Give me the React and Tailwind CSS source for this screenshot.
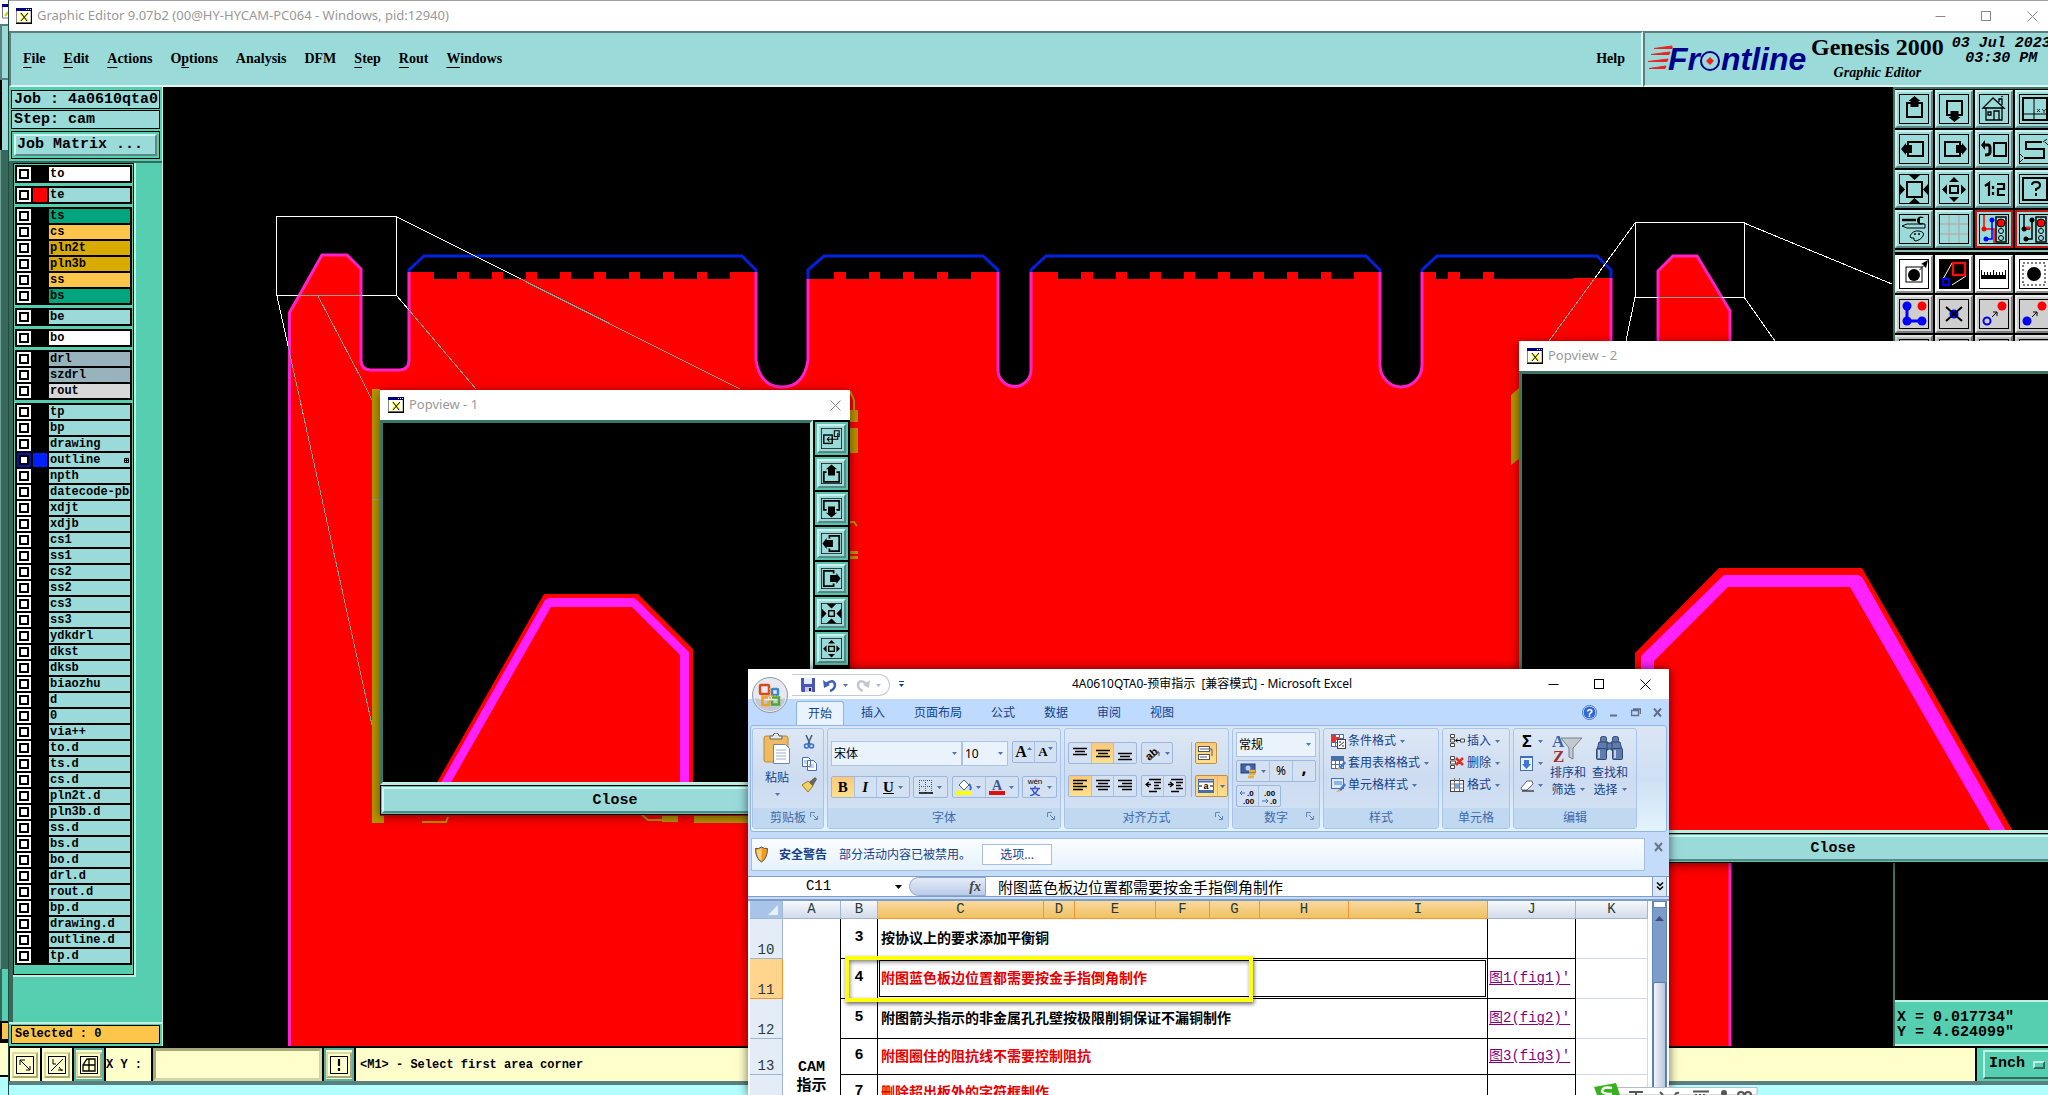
import React from "react";

const MONO = "font-['Liberation_Mono',monospace]";
const SERIF = "font-['Liberation_Serif',serif]";
const UI = "font-['Noto_Sans','Noto_Sans_CJK_SC',sans-serif]";
const SHEET = "font-['Liberation_Mono','Noto_Sans_CJK_SC',monospace]";

/* ---------- small shared pieces ---------- */

function WinIcon() {
  return (
    <svg width="16" height="16" viewBox="0 0 16 16" className="shrink-0" aria-hidden="true">
      <rect x="0.5" y="0.5" width="15" height="14" fill="#fff" stroke="#888" />
      <rect x="0" y="0" width="16" height="3" fill="#000080" />
      <path d="M10 1.5h1M12 1.5h1M14 1.5h1" stroke="#fff" />
      <path d="M4 5l8 8M12 5l-8 8" stroke="#ffff00" strokeWidth="2" />
      <path d="M5 5l6 8M12 5l-7 8" stroke="#000" strokeWidth="1" />
      <path d="M0 15.5h16M15.5 0v16" stroke="#000" strokeWidth="1.4" />
    </svg>
  );
}

const Min = ({ c }) => (
  <svg width="11" height="11" aria-hidden="true"><path d="M0.5 5.5h10" stroke={c} /></svg>
);
const Max = ({ c }) => (
  <svg width="11" height="11" aria-hidden="true"><rect x="0.5" y="0.5" width="9" height="9" fill="none" stroke={c} /></svg>
);
const Cross = ({ c }) => (
  <svg width="11" height="11" aria-hidden="true"><path d="M0.5 0.5l10 10M10.5 0.5l-10 10" stroke={c} /></svg>
);

/* ---------- tool icons, all on a 30 x 30 grid ---------- */

const Frame = <rect x="0.5" y="0.5" width="29" height="29" fill="none" stroke="#000" />;
const Sq = ({ x, y, w = 15, h = 14 }) => (
  <rect x={x} y={y} width={w} height={h} fill="none" stroke="#000" strokeWidth="2" />
);

const icons = {
  up: <>{Frame}<Sq x={8} y={9} /><path d="M15.5 2l6 5h-2v6h-8v-6h-2z" /></>,
  down: <>{Frame}<Sq x={8} y={7} /><path d="M15.5 28l6-5h-2v-6h-8v6h-2z" /></>,
  left: <>{Frame}<Sq x={9} y={8} /><path d="M2 15l5-6v2h6v8h-6v2z" /></>,
  right: <>{Frame}<Sq x={6} y={8} /><path d="M28 15l-5-6v2h-6v8h6v2z" /></>,
  upBig: <>{Frame}<path d="M8 13H4v14h22V13h-4" fill="none" stroke="#000" strokeWidth="2.500" /><path d="M15 2l8 7h-3v9H10V9H7z" /></>,
  downBig: <>{Frame}<path d="M8 17H4V4h22v13h-4" fill="none" stroke="#000" strokeWidth="2.500" /><path d="M15 28l8-7h-3v-9H10v9H7z" /></>,
  leftBig: <>{Frame}<path d="M12 8V4h14v22H12v-4" fill="none" stroke="#000" strokeWidth="2.500" /><path d="M2 15l6-8v3h9v10H8v3z" /></>,
  rightBig: <>{Frame}<path d="M18 8V4H4v22h14v-4" fill="none" stroke="#000" strokeWidth="2.500" /><path d="M28 15l-6-8v3h-9v10h9v3z" /></>,
  zinBig: <>{Frame}<Sq x={11} y={11} w={8} h={8} /><path d="M8 1h14l-7 7zM8 29h14l-7-7zM1 8v14l7-7zM29 8v14l-7-7z" /></>,
  house: (
    <>{Frame}
      <path d="M4 14L14 4l11 10z M7 14h16v12H7z M15 26v-9h5v9 M9 18h3v3h-3z M20 8v-3h3v6" fill="none" stroke="#000" strokeWidth="1.3" />
      <path d="M22 3l2-1" stroke="#000" />
    </>
  ),
  xy: <>{Frame}<Sq x={4} y={4} w={24} h={22} /><path d="M15 4v22M4 20h24" stroke="#000" /><path d="M18 15l3 3M21 15l-3 3M23 15l2 2 2-2M25 17v2" stroke="#000" fill="none" strokeWidth="0.8" /></>,
  undo: <>{Frame}<Sq x={15} y={9} w={12} h={13} /><path d="M4 11h5q2 0 2 3v4q0 3-5 3" fill="none" stroke="#000" strokeWidth="3" /><path d="M2 11l4-5v10z" /></>,
  snake: <>{Frame}<path d="M23 8H7v7h18v9H5" fill="none" stroke="#000" strokeWidth="2" /><path d="M24 8l4-3M26 8l3 3M4 23l-3-3M4 25l-3 3" stroke="#000" /></>,
  zin: <>{Frame}<Sq x={8} y={8} w={15} h={15} /><path d="M10 1h11l-5.500 5zM10 29h11l-5.500-5zM1 10v11l5-5.500zM29 10v11l-5-5.500z" /></>,
  zout: <>{Frame}<Sq x={11} y={12} w={8} h={7} /><path d="M10 8h10l-5-5zM10 23h10l-5 5zM8 10.500v10l-5-5zM22 10.500v10l5-5z" /></>,
  ratio: <>{Frame}<path d="M6 12l4-3v13M14 12v3M14 18v3M18 10h7v5h-6v6h7" fill="none" stroke="#000" strokeWidth="2.200" /></>,
  help: <>{Frame}<Sq x={4} y={4} w={24} h={22} /><path d="M13 11q0-3 4-3t4 3-4 4v2M17 19v3" fill="none" stroke="#000" strokeWidth="2" /></>,
  tools: (
    <>{Frame}
      <path d="M3 6h14" stroke="#000" strokeWidth="2.500" />
      <path d="M25 4a4 4 0 1 0 0 5h-4v-5z" />
      <path d="M3 12l5-2h18v4H8z" fill="none" stroke="#000" />
      <path d="M11 22q3-6 9-5t4 5-7 5q-3 0-2-3-4 1-4-2z" fill="none" stroke="#000" />
      <circle cx="16" cy="20" r="1" /><circle cx="20" cy="20" r="1" />
    </>
  ),
  grid: <>{Frame}<path d="M10 1v28M20 1v28M1 10h28M1 20h28" stroke="#c49a9a" /></>,
  traffic: (
    <>{Frame}
      <path d="M5 1v14M5 15h10v14" fill="none" stroke="#f00" strokeWidth="1.500" />
      <path d="M13 5v20H6" fill="none" stroke="#00f" strokeWidth="1.500" />
      <circle cx="5" cy="15" r="2.500" fill="#f00" /><circle cx="13" cy="6" r="2.500" fill="#00f" /><circle cx="7" cy="25" r="2.500" fill="#00f" />
      <rect x="17" y="3" width="10" height="25" fill="#9adbda" stroke="#000" strokeWidth="1.500" />
      <circle cx="22" cy="9" r="4" fill="#f00" stroke="#000" /><circle cx="22" cy="17" r="2.500" fill="none" stroke="#000" /><circle cx="22" cy="24" r="2.500" fill="none" stroke="#000" />
    </>
  ),
  traffic2: (
    <>{Frame}
      <path d="M5 1v14h6M13 5v20H6" fill="none" stroke="#000" strokeWidth="1.500" />
      <path d="M7 14h6M8 12v4M10 12v4" stroke="#f00" />
      <circle cx="5" cy="15" r="2.500" /><circle cx="13" cy="6" r="2.500" /><circle cx="7" cy="25" r="2.500" />
      <rect x="17" y="3" width="10" height="25" fill="#9adbda" stroke="#000" strokeWidth="1.500" />
      <circle cx="22" cy="9" r="4" fill="#f00" stroke="#000" /><circle cx="22" cy="17" r="2.500" fill="none" stroke="#000" /><circle cx="22" cy="24" r="2.500" fill="none" stroke="#000" />
    </>
  ),
  select: <>{Frame}<rect x="7" y="8" width="16" height="15" fill="none" stroke="#000" /><circle cx="15" cy="16" r="6" /><path d="M20 11l5-5-3-1 7-4-2 8-2-2-4 4z" /></>,
  popview: <><rect width="30" height="30" /><path d="M4 20L13 4M13 26l14-9" stroke="#fff" /><rect x="14" y="4" width="12" height="12" fill="none" stroke="#e11" strokeWidth="2.500" /><rect x="4" y="20" width="6" height="6" fill="none" stroke="#00f" strokeWidth="2" /></>,
  ruler: <>{Frame}<path d="M2 20v-9h1v5h2v-3h1v3h2v-3h1v3h2v-3h1v3h2v-5h1v5h2v-3h1v3h2v-3h1v3h2v-3h1v3h2v-5h1v9z" /></>,
  area: <>{Frame}<rect x="4" y="4" width="22" height="22" fill="none" stroke="#000" strokeDasharray="2 2" /><circle cx="15" cy="15" r="7" /></>,
  nodes: <>{Frame}<path d="M8 7v15h15" fill="none" stroke="#00f" strokeWidth="3" /><circle cx="8" cy="7" r="4.500" fill="#00f" /><circle cx="8" cy="22" r="4.500" fill="#00f" /><circle cx="23" cy="22" r="4.500" fill="#00f" /><circle cx="23" cy="7" r="4.500" fill="#f00" /></>,
  cut: <>{Frame}<circle cx="15" cy="15" r="4.500" fill="#00f" /><path d="M7 8l16 14M23 8L7 22" stroke="#000" strokeWidth="2" /></>,
  link: <>{Frame}<circle cx="23" cy="7" r="4.500" fill="#f00" /><circle cx="8" cy="22" r="3.500" fill="none" stroke="#00f" strokeWidth="2" /><path d="M13 18l5-5M14 13h4v4" stroke="#000" fill="none" /></>,
  move: <>{Frame}<circle cx="23" cy="7" r="4.500" fill="#f00" /><circle cx="8" cy="22" r="4.500" fill="#00f" /><path d="M13 18l5-5M14 13h4v4" stroke="#000" fill="none" /></>,
  back: <>{Frame}<Sq x={4} y={10} w={12} h={12} /><path d="M19 4h7v8h-7zM24 7v9h-14M12 12.500l-3 3.500 3 3.500" fill="none" stroke="#000" strokeWidth="1.500" /></>,
  blank: <>{Frame}</>,
};

const tones = {
  teal: "border-t-[#cdf0ef] border-l-[#cdf0ef] border-b-[#5b8787] border-r-[#5b8787] bg-[#9adbda]",
  red: "border-[#c41414] bg-[#9adbda]",
  white: "border-t-[#f4f4f4] border-l-[#f4f4f4] border-b-[#8d8d8d] border-r-[#8d8d8d] bg-white",
  grey: "border-t-[#ececec] border-l-[#ececec] border-b-[#7d7d7d] border-r-[#7d7d7d] bg-[#cfcfcf]",
};

function ToolButton({ icon, tone = "teal" }) {
  return (
    <button aria-label={icon} className={`h-[38px] w-[38px] border-2 p-[2px] ${tones[tone]}`}>
      <svg viewBox="0 0 30 30" className="block h-full w-full">{icons[icon]}</svg>
    </button>
  );
}

/* ---------- main window ---------- */

const menu = [["", "F", "ile"], ["", "E", "dit"], ["", "A", "ctions"], ["O", "p", "tions"], ["Analysis", "", ""], ["DFM", "", ""], ["", "S", "tep"], ["", "R", "out"], ["", "W", "indows"]];

function Logo() {
  return (
    <svg width="163" height="40" viewBox="0 0 163 40" className="shrink-0" role="img" aria-label="Frontline">
      <path d="M24 5L6 7.500h18zM22 11L3 13.500h18zM20 18L0 20.500h19zM18 25L1 27.500h16z" fill="#e22" stroke="#e22" />
      <g fontFamily="Liberation Sans, sans-serif" fontWeight="700" fontStyle="italic" fontSize="32" fill="#00008b">
        <text x="20" y="29">Fr</text>
        <text x="73" y="29">ntline</text>
      </g>
      <circle cx="62" cy="20" r="9" fill="#9adbda" stroke="#00008b" strokeWidth="2" />
      <path d="M62 16l4 4-4 4-4-4z" fill="#e22" />
    </svg>
  );
}

function Header() {
  return (
    <header className="flex h-14 bg-[#9adbda]">
      <nav className={`flex min-w-0 flex-1 items-center gap-[18px] border-2 border-t-[#5b7f80] border-r-[#dff5f5] border-b-[#dff5f5] border-l-[#5b7f80] pl-3 pr-4 text-[14px] font-bold leading-[18px] text-black ${SERIF}`}>
        {menu.map(([a, b, c]) => (
          <button key={a + b + c}>{a}{b && <u className="underline-offset-[4px]">{b}</u>}{c}</button>
        ))}
        <button className="ml-auto">Help</button>
      </nav>
      <div className="flex w-[405px] shrink-0 overflow-hidden border-2 border-r-0 border-t-[#5b7f80] border-b-[#dff5f5] border-l-[#5b7f80] pl-[3px] text-black">
        <div className="pt-2"><Logo /></div>
        <div className={`shrink-0 text-center ${SERIF}`}>
          <h1 className="text-[24px] font-bold leading-7">Genesis 2000</h1>
          <p className="pt-[2px] text-[14px] font-bold italic leading-5">Graphic Editor</p>
        </div>
        <div className={`shrink-0 whitespace-nowrap pl-2 pt-[3px] text-center text-[15px] font-bold italic leading-[15px] ${MONO}`}>
          <p>03 Jul 2023</p>
          <p>03:30 PM</p>
        </div>
      </div>
    </header>
  );
}

const C = { w: "bg-white", t: "bg-[#9adbda]", g: "bg-[#00a57c]", o: "bg-[#fdc64b]", y: "bg-[#d9ab00]", b: "bg-[#99b3bd]", s: "bg-[#d8d8d8]" };
const groups = [
  [["to", "w"]],
  [["te", "t"]],
  [["ts", "g"], ["cs", "o"], ["pln2t", "y"], ["pln3b", "y"], ["ss", "o"], ["bs", "g"]],
  [["be", "t"]],
  [["bo", "w"]],
  [["drl", "b"], ["szdrl", "b"], ["rout", "s"]],
  "tp bp drawing outline npth datecode-pbc xdjt xdjb cs1 ss1 cs2 ss2 cs3 ss3 ydkdrl dkst dksb biaozhu d 0 via++ to.d ts.d cs.d pln2t.d pln3b.d ss.d bs.d bo.d drl.d rout.d bp.d drawing.d outline.d tp.d".split(" ").map((n) => [n, "t"]),
];

function LayerRow({ name, color }) {
  const active = name === "outline";
  const swatch = name === "te" ? "bg-[#f00]" : active ? "bg-[#0020ff]" : "bg-black";
  return (
    <label className="flex h-4 items-center gap-[2px]">
      <input
        type="checkbox"
        className={`h-[14px] w-[14px] shrink-0 appearance-none border-2 bg-white shadow-[inset_0_0_0_2px_#000] ${active ? "border-[#0a12a0]" : "border-white"}`}
      />
      <span className={`h-[14px] w-[14px] shrink-0 ${swatch}`} />
      <span className={`flex h-[14px] flex-1 items-center overflow-hidden whitespace-nowrap pl-px text-[12px] font-bold leading-[14px] text-black ${MONO} ${C[color]}`}>
        {name}
        {active && (
          <svg width="5" height="5" className="ml-auto mr-px" aria-hidden="true"><path d="M0.500 0.500h4v4h-4zM2.500 0v5M0 2.500h5" fill="none" stroke="#000" /></svg>
        )}
      </span>
    </label>
  );
}

function LayerPanel() {
  return (
    <aside className="flex w-[154px] shrink-0 flex-col border-r border-[#bdf2e2] bg-[#55cfb0]">
      <div className={`flex flex-col gap-px px-[2px] pt-[3px] text-[15px] font-bold text-black ${MONO}`}>
        <p className="h-[19px] overflow-hidden whitespace-nowrap border border-black bg-[#9adbda] pl-[2px] leading-[18px]">Job : 4a0610qta0</p>
        <p className="h-[19px] border border-black bg-[#9adbda] pl-[2px] leading-[17px]">Step: cam</p>
        <div className="mt-px h-[28px] border border-black p-[2px]">
          <button className="block h-[22px] w-full border-2 border-t-[#d5f5f5] border-r-[#5b8787] border-b-[#5b8787] border-l-[#d5f5f5] bg-[#9adbda] pl-px text-left leading-[18px]">Job Matrix ...</button>
        </div>
      </div>
      <div className="mt-[2px] min-h-0 flex-1 border-l-4 border-t-2 border-[#35695c]">
        <div className="w-[123px] border-b-2 border-r-2 border-[#bdf2e2]">
          <div className="flex flex-col gap-[3px] border border-black p-px pb-[9px]">
            {groups.map((g, i) => (
              <div key={i} className="border border-black bg-black px-px">
                {g.map(([n, c]) => <LayerRow key={n} name={n} color={c} />)}
              </div>
            ))}
          </div>
        </div>
      </div>
      <div className="border-t-2 border-[#bdf2e2] p-[2px] pt-px">
        <p className={`h-[19px] border border-black bg-[#fdc64b] pl-[3px] text-[12px] font-bold leading-[17px] text-black ${MONO}`}>Selected : 0</p>
      </div>
    </aside>
  );
}

/* Board artwork; coordinates are those of the whole screen, shifted once by the group. */
const board1Teeth = [434, 469, 503, 537, 571, 606, 640, 674, 707];
const row = (dx) => board1Teeth.map((x) => `H${x + dx}V279H${x + dx + 23}V272`).join("");
const boardPath =
  `M288 1050V312L321 255H347L362 269V360Q362 370 372 370H399Q409 370 409 360V272${row(0)}H756V360Q760 387 782 387Q804 387 808 360V279` +
  "H834V272H846V279H869V272H880V279H903V272H914V279H937V272H948V279H971V272H998V370A16.500 16.500 0 0 0 1031 370V272" +
  `${row(624)}H1380V365A21 22 0 0 0 1422 365V272` +
  "H1436V279H1448V272H1460V279H1483V272H1494V279H1573V278H1611V370H1658V271L1673 256H1698L1730 311V1050Z";
const traces =
  "M289.500 1050V313L322 255H347L361 269V360Q361 370 371 370H399Q409 370 409 360V272 M756 272V360Q760 387 782 387Q804 387 808 360V279 M998 272V370A16.500 16.500 0 0 0 1031 370V272 M1380 272V365A21 22 0 0 0 1422 365V272 M1611 278V370H1658V271L1673 256H1697L1730 311V1050";
const blue =
  "M409 272V270L424 256H742L756 270V272 M808 279V270L824 256H983L998 270V272 M1031 272V270L1046 256H1366L1380 270V272 M1422 272V270L1437 256H1597L1611 270V278";
const rays =
  "M276.500 216.500h120v79h-120z M397 217L740 389 M397 296L476 389 M277 296L372 725 M318 296L362 380 372 400 M1635.500 222.500h109v74.500h-109z M1635 223L1549 341 M1744 223L1892 284 M1635 297L1626 341 M1744 297L1775 341 M372 499h8";

function BoardCanvas() {
  return (
    <svg className="min-h-0 min-w-0 flex-1 bg-black" role="img" aria-label="Board artwork">
      <defs><clipPath id="board"><path d={boardPath} /></clipPath></defs>
      <g transform="translate(-163 -87)">
        <path d={boardPath} fill="#f00" />
        <path d={traces} fill="none" stroke="#f2c" strokeWidth="3" />
        <path d={blue} fill="none" stroke="#0022dd" strokeWidth="3" />
        <g fill="#b89400">
          <path d="M372 389h8v427h4v7h-12z M850 410h8v12h-8z M850 428h8v25h-8z M850 551h8v3h-8z M850 556h8v3h-8z M694 816h60v7h-60z M662 816h16v6h-16z" />
          <path d="M1511 395l8-7v71l-8 6z" />
        </g>
        <path d="M850 391l4 9v10 M850 522h4l3 4 M642 815l6 5h14 M422 822h24l2-5" fill="none" stroke="#b89400" strokeWidth="2" />
        <g fill="none" shapeRendering="crispEdges">
          <path d={rays} stroke="#fff" />
          <path d={rays} stroke="#8f9f8f" clipPath="url(#board)" />
        </g>
      </g>
    </svg>
  );
}

const toolRows = [
  ["up", "teal"], ["down", "teal"], ["house", "teal"], ["xy", "teal"],
  ["left", "teal"], ["right", "teal"], ["undo", "teal"], ["snake", "teal"],
  ["zin", "teal"], ["zout", "teal"], ["ratio", "teal"], ["help", "teal"],
  ["tools", "teal"], ["grid", "teal"], ["traffic", "red"], ["traffic2", "red"],
];
const toolRows2 = [
  ["select", "white"], ["popview", "white"], ["ruler", "white"], ["area", "white"],
  ["nodes", "grey"], ["cut", "grey"], ["link", "grey"], ["move", "grey"],
  ["blank", "grey"], ["blank", "grey"], ["blank", "grey"], ["blank", "grey"],
];

function Toolbox() {
  return (
    <aside className="flex w-[155px] shrink-0 flex-col overflow-hidden border-l-2 border-[#3b7566] bg-black">
      <div className="border-t-2 border-[#3b7566] pt-px">
        <div className="grid w-[158px] grid-cols-4 gap-[2px]">
          {toolRows.map(([i, t]) => <ToolButton key={i} icon={i} tone={t} />)}
        </div>
      </div>
      <div className="mt-[2px] border-t-2 border-[#8fbfb5] pt-[3px]">
        <div className="grid w-[158px] grid-cols-4 gap-[2px]">
          {toolRows2.map(([i, t], k) => <ToolButton key={k} icon={i} tone={t} />)}
        </div>
      </div>
      <div className={`mt-auto border-y-2 border-[#bdf2e2] bg-[#55cfb0] px-[2px] pb-1 pt-2 text-[15px] font-bold leading-[15px] text-black ${MONO}`}>
        <p>X = 0.017734"</p>
        <p>Y = 4.624099"</p>
      </div>
    </aside>
  );
}

function StatusButton({ label, teal, children }) {
  return (
    <button aria-label={label} className={`flex w-[30px] shrink-0 items-center justify-center border-2 ${teal ? "border-[#55b59d]" : "border-[#ffffcc]"} bg-[#ffffcc]`}>
      <span className="border-2 border-t-[#d9d9a6] border-r-[#a8a87a] border-b-[#a8a87a] border-l-[#d9d9a6] p-[2px]">
        <svg width="18" height="18" viewBox="0 0 18 18" className="block">
          <rect x="0.500" y="0.500" width="17" height="17" fill="none" stroke="#000" />
          {children}
        </svg>
      </span>
    </button>
  );
}

function StatusBar() {
  return (
    <footer className="border-t-2 border-black bg-[#b3ffff]">
      <div className={`flex h-[33px] gap-[2px] bg-black pl-px text-[12px] font-bold text-black ${MONO}`}>
        <StatusButton label="Zoom"><path d="M4 4l10 10M4 9V4h5M14 10v4h-4" fill="none" stroke="#000" /></StatusButton>
        <StatusButton label="Absolute or delta"><path d="M3 15L15 3M5 3v5h3M10 14h5M11 11l3 4" fill="none" stroke="#000" /></StatusButton>
        <StatusButton label="Snap to grid" teal><path d="M3 9h12M9 3v12M3 15V9l4-6h8v12z" fill="none" stroke="#000" strokeWidth="1.300" /></StatusButton>
        <label htmlFor="xy" className="flex w-[45px] shrink-0 items-center whitespace-nowrap bg-[#ffffcc]">X Y :</label>
        <input id="xy" className="w-[169px] shrink-0 border-[3px] border-b-[#d4d4a4] border-r-[#d4d4a4] border-t-[#a8a87a] border-l-[#a8a87a] bg-[#ffffcc] px-1 outline-none" />
        <StatusButton label="Alert" teal><path d="M9 3v7M9 12v3" stroke="#000" strokeWidth="2.200" /></StatusButton>
        <p className="flex min-w-0 flex-1 items-center bg-[#ffffcc] pl-1">&lt;M1&gt; - Select first area corner</p>
        <div className="flex w-[71px] shrink-0 bg-[#55cfb0] py-[2px] pl-[6px]">
          <button className="flex flex-1 items-center gap-2 border-2 border-r-0 border-t-[#bdf2e2] border-l-[#bdf2e2] border-b-[#35695c] pl-1 text-[15px]">
            Inch
            <span className="h-2 w-3 shrink-0 border-2 border-t-[#bdf2e2] border-l-[#bdf2e2] border-r-[#35695c] border-b-[#35695c]" />
          </button>
        </div>
      </div>
      <div className="h-[14px] border-t-4 border-[#5b7f80]" />
    </footer>
  );
}

/* ---------- pop-up viewers ---------- */

function Popview({ title, className, tools, closable, children }) {
  return (
    <section className={`absolute flex flex-col bg-black shadow-[0_2px_10px_rgba(0,0,0,0.5)] ${className}`}>
      <div className={`flex h-[30px] shrink-0 items-center gap-[5px] bg-white pl-2 pr-[9px] text-[13px] text-[#999] ${UI}`}>
        <WinIcon />
        <h2>{title}</h2>
        {closable && <button aria-label="Close window" className="ml-auto"><Cross c="#888" /></button>}
      </div>
      <div className="flex min-h-0 flex-1">
        <div className="flex min-w-0 flex-1 border-[3px] border-t-[#3b7566] border-l-[#3b7566] border-r-[#b9f0e2] border-b-[#b9f0e2]">
          {children}
        </div>
        {tools && (
          <div className="flex w-[37px] shrink-0 flex-col items-center gap-[2px] overflow-hidden pt-[2px]">
            {tools.map((t) => (
              <button key={t} aria-label={t} className="h-[33px] w-[33px] shrink-0 border-2 border-[#55c5ad]">
                <span className="block h-full border-2 border-t-[#cdf0ef] border-l-[#cdf0ef] border-b-[#5b8787] border-r-[#5b8787] bg-[#9adbda] p-[2px]">
                  <svg viewBox="0 0 30 30" className="block h-full w-full">{icons[t]}</svg>
                </span>
              </button>
            ))}
          </div>
        )}
      </div>
      <div className="border border-black bg-[#55c5ad] p-px">
        <button className={`block h-[26px] w-full border-2 border-t-[#d5f5f5] border-l-[#d5f5f5] border-r-[#5b8787] border-b-[#5b8787] bg-[#9adbda] text-[15px] font-bold leading-6 text-black ${MONO}`}>Close</button>
      </div>
    </section>
  );
}

/* ---------- spreadsheet window ---------- */

const Arrow = ({ up }) => (
  <svg width="5" height="3" className="shrink-0" aria-hidden="true"><path d={up ? "M0 3h5L2.500 0z" : "M0 0h5L2.500 3z"} fill="#4f74b0" /></svg>
);

function Group({ label, launcher, className, children }) {
  return (
    <div className={`flex h-[101px] shrink-0 flex-col rounded-[3px] border border-[#a9c4e8] bg-gradient-to-b from-[#dde8f5] via-[#cddcf0] to-[#d3e2f4] ${className}`}>
      <div className="min-h-0 flex-1">{children}</div>
      <div className="relative h-5 bg-[#c1d8f1] text-center leading-5 text-[#3e6aaa]">
        {label}
        {launcher && (
          <svg width="8" height="8" className="absolute right-[5px] top-[4px]" aria-hidden="true"><path d="M0.500 5V0.500H5M3 3l4 4M7.500 4v3.500H4" fill="none" stroke="#6684b0" /></svg>
        )}
      </div>
    </div>
  );
}

const Seg = ({ className = "", children }) => (
  <div className={`flex h-[22px] shrink-0 divide-x divide-[#a9c1e2] overflow-hidden rounded-[2px] border border-[#9cb7dd] bg-[#d3e1f3] ${className}`}>{children}</div>
);
const Btn = ({ on, label, className = "flex-1", children }) => (
  <button aria-label={label} className={`flex items-center justify-center gap-1 ${on ? "bg-gradient-to-b from-[#fbc878] to-[#fde08c]" : ""} ${className}`}>{children}</button>
);
const Lines = ({ d }) => <svg width="16" height="16" aria-hidden="true"><path d={d} stroke="#000" strokeWidth="1.400" fill="none" /></svg>;

const Combo = ({ label, value, className }) => (
  <div className={`relative flex items-center border border-[#a9c4e8] bg-[#eaf2fb] ${className}`}>
    <select aria-label={label} className="h-full w-full appearance-none bg-transparent pl-[2px] text-black outline-none"><option>{value}</option></select>
    <span className="pointer-events-none absolute right-1 flex"><Arrow /></span>
  </div>
);

const miniTable = (
  <><rect x="1.500" y="1.500" width="12" height="12" fill="#fff" stroke="#4a6ea9" /><path d="M1.500 5.500h12M1.500 9.500h12M5.500 1.500v12M9.500 1.500v12" stroke="#4a6ea9" /></>
);
const miniIcons = {
  cond: <>{miniTable}<path d="M2 2h3v7H2zM6 4h3v3H6z" fill="#d33" /><rect x="7.500" y="6.500" width="8" height="9" fill="#fff" stroke="#444" /><path d="M9 9h2M9 13l5-4M12 13h2" stroke="#333" /></>,
  tbl: <>{miniTable}<path d="M2 2h11v3H2z" fill="#4a6ea9" /><path d="M8 14l6-8 2 2-5 6z" fill="#3c78d8" /><path d="M6 15l3-3 2 2z" fill="#eca53b" /></>,
  cell: <><rect x="1.500" y="1.500" width="12" height="10" fill="#dce8f8" stroke="#4a6ea9" /><path d="M4 4h8v4H4z" fill="#8fb4ea" /><path d="M8 14l6-8 2 2-5 6z" fill="#3c78d8" /><path d="M6 15l3-3 2 2z" fill="#eca53b" /></>,
  ins: <><path d="M1.500 1.500h4v3h-4zM1.500 10.500h4v3h-4zM1.500 6h4v3h-4zM11.500 6h4v3h-4z" fill="#fff" stroke="#444" /><path d="M7 7.500h4M8.500 6l-2 1.500 2 1.500" stroke="#000" fill="none" /></>,
  del: <><path d="M1.500 1.500h4v3h-4zM1.500 10.500h4v3h-4zM1.500 6h5v3h-5z" fill="#fff" stroke="#444" /><path d="M7 3l7 7M14 3l-7 7" stroke="#e03020" strokeWidth="2.500" /></>,
  fmt: <><rect x="1.500" y="3.500" width="13" height="11" fill="#fff" stroke="#444" /><path d="M1.500 7h13M1.500 11h13M5.500 1v13M10.500 1v13" stroke="#777" /><path d="M6 7h4v4H6z" fill="#7aa5e8" /></>,
};
const MiniItem = ({ icon, children }) => (
  <button className="flex h-[22px] items-center gap-[2px] whitespace-nowrap text-[#15428b]">
    <svg width="16" height="16" aria-hidden="true">{miniIcons[icon]}</svg>
    <span>{children}</span>
    <span className="ml-[2px] flex"><Arrow /></span>
  </button>
);

function Ribbon() {
  return (
    <div className="mx-[2px] flex h-[107px] gap-[3px] rounded-[3px] border border-[#8fb5e2] bg-gradient-to-b from-[#dbe6f4] via-[#cfe0f5] to-[#e3f4fd] p-[2px] pl-px">
      <Group label="剪贴板" launcher className="w-[72px]">
        <div className="flex justify-between pl-[9px] pr-[6px] pt-1 text-[#15428b]">
          <button className="flex w-[30px] flex-col items-center">
            <svg width="30" height="32" aria-hidden="true">
              <rect x="2" y="3" width="24" height="26" rx="2" fill="#eebb62" stroke="#b98a3a" />
              <path d="M8 6V3h3a3 3 0 0 1 6 0h3v3z" fill="#e8e8e8" stroke="#666" />
              <path d="M11.500 11.500h12l4 4v15h-16z" fill="#fff" stroke="#6a87b8" />
              <path d="M14 17h10M14 20h10M14 23h10M14 26h10" stroke="#9ab0d0" />
            </svg>
            <span className="mt-[4px] h-[17px] whitespace-nowrap leading-[17px]">粘贴</span>
            <span className="mt-[7px] flex"><Arrow /></span>
          </button>
          <div className="flex flex-col items-center gap-[6px] pt-[2px]">
            <button aria-label="剪切"><svg width="16" height="15"><path d="M5 0l4 9M11 0L7 9" stroke="#4a5f80" strokeWidth="1.600" /><circle cx="5.500" cy="11" r="2" fill="none" stroke="#3c6fc4" strokeWidth="1.600" /><circle cx="10.500" cy="11" r="2" fill="none" stroke="#3c6fc4" strokeWidth="1.600" /></svg></button>
            <button aria-label="复制"><svg width="16" height="15"><path d="M1.500 1.500h6l2 2v7h-8zM6.500 4.500h6l3 3v7h-9z" fill="#fff" stroke="#4a6ea9" /><path d="M8 9h5M8 11h5M3 5h3M3 7h3" stroke="#7fa0d6" /></svg></button>
            <button aria-label="格式刷"><svg width="16" height="15"><path d="M1 8l6-4 5 5-5 6z" fill="#f0d060" stroke="#9a7a20" /><path d="M8 5l4 4 4-7-2-2z" fill="#666" /></svg></button>
          </div>
        </div>
      </Group>

      <Group label="字体" launcher className="w-[234px]">
        <div className="flex flex-col gap-[10px] px-[3px] pt-3">
          <div className="flex h-[25px] items-start">
            <Combo label="字体" value="宋体" className="h-[25px] w-[131px]" />
            <Combo label="字号" value="10" className="h-[25px] w-[46px]" />
            <Seg className="ml-auto w-[45px]">
              <Btn label="增大字号"><b className={`text-[16px] leading-4 ${SERIF}`}>A</b><span className="-ml-1 -mt-2"><Arrow up /></span></Btn>
              <Btn label="减小字号"><b className={`text-[13px] leading-4 ${SERIF}`}>A</b><span className="-ml-1 -mt-2"><Arrow /></span></Btn>
            </Seg>
          </div>
          <div className={`flex justify-between text-[15px] text-black ${SERIF}`}>
            <Seg className="w-[79px]">
              <Btn on label="加粗"><b>B</b></Btn>
              <Btn label="倾斜"><b><i>I</i></b></Btn>
              <Btn label="下划线" className="w-8"><b><u>U</u></b><Arrow /></Btn>
            </Seg>
            <Seg className="w-[35px]"><Btn label="边框"><svg width="14" height="14"><path d="M0.500 0v13M6.500 0v13M12.500 0v13M0 0.500h13M0 6.500h13" stroke="#555" strokeDasharray="1 1" /><path d="M0 13h14" stroke="#000" strokeWidth="1.500" /></svg><Arrow /></Btn></Seg>
            <Seg className="w-[67px]">
              <Btn label="填充颜色"><svg width="16" height="16"><path d="M3 6l5-5 5 5-5 5z" fill="#fff" stroke="#4a5f80" /><path d="M13 5q3 3 1 6" stroke="#3c6fc4" strokeWidth="2" fill="none" /><path d="M0 12h16v4H0z" fill="#ff0" /></svg><Arrow /></Btn>
              <Btn label="字体颜色"><svg width="16" height="16"><text x="8" y="11" textAnchor="middle" fontSize="14" fontWeight="700" fill="#3a5a96" fontFamily="Liberation Serif, serif">A</text><path d="M0 12h16v4H0z" fill="#e01010" /></svg><Arrow /></Btn>
            </Seg>
            <Seg className="w-[35px]"><Btn label="拼音"><span className="flex w-4 flex-col items-center"><span className="h-2 text-[8px] leading-[8px] text-black font-['Liberation_Sans',sans-serif]">wén</span><svg width="12" height="10" aria-hidden="true"><path d="M6 0v2M1 2.500h10M3 3q2 5 8 7M9 3Q7 8 1 10" fill="none" stroke="#3c55c4" strokeWidth="1.500" /></svg></span><Arrow /></Btn></Seg>
          </div>
        </div>
      </Group>

      <Group label="对齐方式" launcher className="w-[165px]">
        <div className="flex gap-1 px-[3px] pt-[13px]">
          <div className="flex flex-col gap-[11px]">
            <Seg className="w-[69px]">
              <Btn label="顶端对齐"><Lines d="M1 3.500h14M3 6.500h10M1 9.500h14" /></Btn>
              <Btn on label="垂直居中"><Lines d="M1 5.500h14M3 8.500h10M1 11.500h14" /></Btn>
              <Btn label="底端对齐"><Lines d="M1 8.500h14M3 11.500h10M1 14.500h14" /></Btn>
            </Seg>
            <Seg className="w-[69px]">
              <Btn on label="左对齐"><Lines d="M1 2.500h14M1 5.500h10M1 8.500h14M1 11.500h10" /></Btn>
              <Btn label="居中"><Lines d="M1 2.500h14M3 5.500h10M1 8.500h14M3 11.500h10" /></Btn>
              <Btn label="右对齐"><Lines d="M1 2.500h14M5 5.500h10M1 8.500h14M5 11.500h10" /></Btn>
            </Seg>
          </div>
          <div className="flex flex-col items-start gap-[11px]">
            <Seg className="w-8"><Btn label="方向"><svg width="16" height="16"><text x="0" y="13" transform="rotate(-40 6 9)" fontSize="11" fontWeight="700" fontFamily="Liberation Sans, sans-serif">ab</text><path d="M5 15l9-8M14 11V7h-4" stroke="#555" fill="none" /></svg><Arrow /></Btn></Seg>
            <Seg className="w-[45px]">
              <Btn label="减少缩进"><Lines d="M4 1.500h12M9 4.500h7M9 7.500h5M9 10.500h7M4 13.500h8M1 6.500h5M4 4l-3 2.500 3 2.500" /></Btn>
              <Btn label="增加缩进"><Lines d="M4 1.500h12M9 4.500h7M9 7.500h5M9 10.500h7M4 13.500h8M1 6.500h5M3 4l3 2.500-3 2.500" /></Btn>
            </Seg>
          </div>
          <div className="ml-px flex flex-col items-start gap-[11px] border-l border-[#9cb7dd] pl-[3px]">
            <Seg className="w-[22px] border-[#c09040]"><Btn on label="自动换行"><svg width="18" height="16"><rect x="1.500" y="1.500" width="11" height="5" fill="#fff" stroke="#555" /><rect x="1.500" y="9.500" width="11" height="5" fill="#fff" stroke="#555" /><path d="M3 4h12v7M3 12h7" stroke="#4a5f80" fill="none" /></svg></Btn></Seg>
            <Seg className="w-[33px] border-[#c09040]"><Btn on label="合并后居中" className="w-[22px]"><svg width="17" height="15"><rect x="0.500" y="0.500" width="15" height="13" fill="#fff" stroke="#4a6ea9" /><path d="M1 2.500h15M1 12h15" stroke="#4a6ea9" strokeWidth="2" /><text x="8" y="10" textAnchor="middle" fontSize="9" fontWeight="700" fontFamily="Liberation Sans, sans-serif">a</text><path d="M1 7h3M12 7h3" stroke="#000" /></svg></Btn><Btn on label="合并选项"><Arrow /></Btn></Seg>
          </div>
        </div>
      </Group>

      <Group label="数字" launcher className="w-[88px]">
        <div className="flex flex-col gap-[3px] px-[3px] pt-[3px] text-black">
          <Combo label="数字格式" value="常规" className="h-[25px] w-full" />
          <Seg className="w-full">
            <Btn label="会计格式" className="w-[33px]"><svg width="17" height="16"><rect x="1" y="1" width="14" height="9" fill="#3f62a8" stroke="#28406f" /><circle cx="8" cy="5" r="2.500" fill="#bcd0f0" /><path d="M9 8h6M9 11h6M8 14h6" stroke="#e8b13c" strokeWidth="2.500" /></svg><Arrow /></Btn>
            <Btn label="百分比">%</Btn>
            <Btn label="千位分隔"><b className="-mt-2 text-[18px] leading-5">,</b></Btn>
          </Seg>
          <Seg className="w-[45px]">
            <Btn label="增加小数位数"><svg width="17" height="17" fontSize="8" fontWeight="700" fontFamily="Liberation Sans, sans-serif"><text x="8" y="8">.0</text><text x="4" y="16">.00</text><path d="M1 5h5M3 3L1 5l2 2" stroke="#3c6fc4" fill="none" /></svg></Btn>
            <Btn label="减少小数位数"><svg width="17" height="17" fontSize="8" fontWeight="700" fontFamily="Liberation Sans, sans-serif"><text x="3" y="8">.00</text><text x="9" y="16">.0</text><path d="M1 13h6M5 11l2 2-2 2" stroke="#3c6fc4" fill="none" /></svg></Btn>
          </Seg>
        </div>
      </Group>

      <Group label="样式" className="w-[116px]">
        <div className="flex flex-col pl-[6px] pt-px"><MiniItem icon="cond">条件格式</MiniItem><MiniItem icon="tbl">套用表格格式</MiniItem><MiniItem icon="cell">单元格样式</MiniItem></div>
      </Group>
      <Group label="单元格" className="w-[68px]">
        <div className="flex flex-col pl-[6px] pt-px"><MiniItem icon="ins">插入</MiniItem><MiniItem icon="del">删除</MiniItem><MiniItem icon="fmt">格式</MiniItem></div>
      </Group>
      <Group label="编辑" className="w-[124px]">
        <div className="flex gap-[6px] pl-[6px] pt-px text-[#15428b]">
          <div className="flex flex-col">
            <button aria-label="求和" className="flex h-[22px] items-center gap-1 text-black"><b className="w-[14px] text-[16px] leading-5">Σ</b><Arrow /></button>
            <button aria-label="填充" className="flex h-[22px] items-center gap-1"><svg width="14" height="15"><rect x="0.500" y="0.500" width="12" height="14" fill="#e8f0fb" stroke="#4a6ea9" /><path d="M0 1h13" stroke="#3c6fc4" strokeWidth="2" /><path d="M4 4h5v4h2l-4.500 5L2 8h2z" fill="#3c78d8" /></svg><Arrow /></button>
            <button aria-label="清除" className="flex h-[22px] items-center gap-1"><svg width="14" height="13"><path d="M1 9l6-7h5l1 3-6 6H2z" fill="#fff" stroke="#667" /><path d="M2 12h12" stroke="#000" /></svg><Arrow /></button>
          </div>
          <button className="flex w-[38px] flex-col items-center pt-[2px] leading-[17px]">
            <svg width="32" height="32" aria-hidden="true">
              <g fontFamily="Liberation Serif, serif" fontWeight="700" fontSize="17"><text x="0" y="15" fill="#3f62a8">A</text><text x="1" y="30" fill="#a33030">Z</text></g>
              <path d="M9 6h21l-9 10v11l-4-2V16z" fill="#c4c8cf" stroke="#7a7f88" />
            </svg>
            <span className="whitespace-nowrap">排序和</span>
            <span className="flex items-center gap-1 whitespace-nowrap">筛选<Arrow /></span>
          </button>
          <button className="-ml-[2px] flex w-[38px] flex-col items-center pt-[2px] leading-[17px]">
            <svg width="30" height="32" aria-hidden="true">
              <g fill="#5f7cb0" stroke="#30466f"><rect x="5.500" y="4.500" width="6" height="6" rx="2" /><rect x="17.500" y="4.500" width="6" height="6" rx="2" /><path d="M4 10h9v8H2zM16 10h9l2 8H16z" /><rect x="1.500" y="16.500" width="10" height="11" rx="1" /><rect x="17.500" y="16.500" width="10" height="11" rx="1" /><rect x="12" y="11" width="5" height="6" /></g>
              <path d="M4 18v8M20 18v8" stroke="#c4d4ee" strokeWidth="2" />
            </svg>
            <span className="whitespace-nowrap">查找和</span>
            <span className="flex items-center gap-1 whitespace-nowrap">选择<Arrow /></span>
          </button>
        </div>
      </Group>
    </div>
  );
}

function ExcelTop() {
  return (
    <>
      <div className="flex h-[30px] items-center bg-white text-black">
        <div className="ml-[44px] mt-[2px] flex h-[22px] w-[98px] items-center gap-2 rounded-r-full border border-l-0 border-[#c5c9d2] pl-[9px]">
          <button aria-label="保存"><svg width="14" height="14"><path d="M0 0h14v14H1l-1-1z" fill="#4a55b8" /><path d="M3 0h8v6H3z" fill="#e4ecff" /><path d="M4 9h7v5H4z" fill="#c8cce0" /><path d="M8 10h2v3H8z" fill="#223" /></svg></button>
          <button aria-label="撤消" className="flex items-center gap-[6px]"><svg width="14" height="14"><path d="M3 6q8-6 9 1 0 4-5 6" fill="none" stroke="#3f62b8" strokeWidth="2.500" /><path d="M0 2l1 8 6-3z" fill="#3f62b8" /></svg><Arrow /></button>
          <button aria-label="恢复" className="flex items-center gap-[6px] opacity-50"><svg width="14" height="14"><path d="M11 6q-8-6-9 1 0 4 5 6" fill="none" stroke="#8890a0" strokeWidth="2.500" /><path d="M14 2l-1 8-6-3z" fill="#8890a0" /></svg><Arrow /></button>
        </div>
        <button aria-label="自定义快速访问工具栏" className="ml-[9px]"><svg width="5" height="6"><path d="M0 0.500h5" stroke="#15428b" /><path d="M0 3h5L2.500 6z" fill="#15428b" /></svg></button>
        <h2 className="flex-1 whitespace-pre pr-[28px] text-center">4A0610QTA0-预审指示  [兼容模式] - Microsoft Excel</h2>
        <div className="flex gap-[35px] pr-[18px]">
          <button aria-label="最小化"><Min c="#000" /></button>
          <button aria-label="最大化"><Max c="#000" /></button>
          <button aria-label="关闭"><Cross c="#000" /></button>
        </div>
      </div>
      <div className="flex h-[26px] items-center bg-[#bfdaff] pl-[48px] text-[#15428b]">
        <button className="mt-[2px] h-6 w-12 rounded-t-[3px] border border-b-0 border-[#8fb5e2] bg-[#e9f3fe]">开始</button>
        <div className="ml-[10px] flex gap-[15px] pt-px">
          {["插入", "页面布局", "公式", "数据", "审阅", "视图"].map((t) => <button key={t} className="whitespace-nowrap px-[7px]">{t}</button>)}
        </div>
        <div className="ml-auto flex items-center gap-[12px] pr-[6px]">
          <button aria-label="帮助"><svg width="15" height="15"><circle cx="7.500" cy="7.500" r="6.500" fill="#2f68d8" stroke="#fff" /><circle cx="7.500" cy="7.500" r="7" fill="none" stroke="#3c6fc4" /><text x="7.500" y="12" textAnchor="middle" fontSize="11" fontWeight="700" fill="#fff" fontFamily="Liberation Sans, sans-serif">?</text></svg></button>
          <button aria-label="最小化窗口"><svg width="10" height="9"><path d="M1 7.500h7" stroke="#5f6f88" strokeWidth="2" /></svg></button>
          <button aria-label="还原窗口"><svg width="10" height="9"><path d="M0.500 2.500h7v5h-7zM2 1h7.500v5" fill="none" stroke="#5f6f88" strokeWidth="1.400" /></svg></button>
          <button aria-label="关闭窗口"><svg width="10" height="9"><path d="M1 0.500l7 8M8 0.500l-7 8" stroke="#5f6f88" strokeWidth="2" /></svg></button>
        </div>
      </div>
      <div className="absolute left-[3px] top-2" aria-hidden="true">
        <svg width="38" height="38">
          <circle cx="19" cy="18" r="17.500" fill="#e6e9ef" stroke="#8b96a8" />
          <path d="M4 21a15 13 0 0 0 30 0q-15 5-30 0z" fill="#c2c8d6" />
          <g fill="none" strokeWidth="2.500">
            <rect x="9" y="8" width="9" height="9" rx="1" stroke="#d8481c" />
            <rect x="21" y="12" width="6" height="6" rx="1" stroke="#3c86d8" />
            <path d="M17 20.500h-5.500v7.500h6v-4" stroke="#f0a020" />
            <path d="M21 20.500h7v7h-7v-4" stroke="#4fa82c" />
            <path d="M19 11v14M11 19h16" stroke="#e8a040" strokeWidth="1.500" strokeDasharray="2 1" />
          </g>
        </svg>
      </div>
    </>
  );
}

const rows = [
  ["10", "3", "按协议上的要求添加平衡铜", false, "", "h-10"],
  ["11", "4", "附图蓝色板边位置都需要按金手指倒角制作", true, "图1(fig1)'", "h-10"],
  ["12", "5", "附图箭头指示的非金属孔孔壁按极限削铜保证不漏铜制作", false, "图2(fig2)'", "h-10"],
  ["13", "6", "附图圈住的阻抗线不需要控制阻抗", true, "图3(fig3)'", "h-9"],
  ["14", "7", "删除超出板外的字符框制作", true, "", "h-9"],
];
const cols = [["A", "w-[58px]"], ["B", "w-[37px]"], ["C", "w-[166px]"], ["D", "w-[31px]"], ["E", "w-[81px]"], ["F", "w-[54px]"], ["G", "w-[50px]"], ["H", "w-[89px]"], ["I", "w-[139px]"], ["J", "w-[88px]"], ["K", "w-[72px]"]];

function Sheet() {
  return (
    <div className={`relative flex min-h-0 flex-1 border-t-2 border-[#7f9dc6] bg-white pl-[2px] text-black ${SHEET}`}>
      <table className="w-[898px] table-fixed border-separate border-spacing-0 self-start">
        <thead>
          <tr className="h-[18px] text-[14px] leading-[17px] text-[#273a3a]">
            <th className="w-[33px] border-b border-r border-[#9eb6ce] bg-[#a9c4e9] p-0"><svg width="10" height="10" className="ml-auto mr-1 block" aria-hidden="true"><path d="M10 0v10H0z" fill="#e8f0fa" /></svg></th>
            {cols.map(([c, w], i) => (
              <th key={c} className={`${w} border-b border-r p-0 font-normal ${i > 1 && i < 9 ? "border-[#f29536] bg-gradient-to-b from-[#f9d99f] to-[#f1c15f]" : "border-[#9eb6ce] bg-gradient-to-b from-[#f6f9fc] to-[#d3dbe9]"}`}>{c}</th>
            ))}
            <th className="border-b border-[#9eb6ce] bg-[#e4e9f1] p-0" />
          </tr>
        </thead>
        <tbody>
          {rows.map(([n, b, text, red, link, h], i) => (
            <tr key={n} className={h}>
              <th className={`border-b border-r p-0 align-bottom text-[14px] font-normal leading-[15px] text-[#273a3a] ${n === "11" ? "border-[#f29536] bg-[#ffd58d]" : "border-[#9eb6ce] bg-[#e4ecf7]"}`}>{n}</th>
              {i === 0 && <td rowSpan={5} className="border-r border-black pb-[15px] text-center align-bottom text-[15px] font-bold leading-[19px]">CAM<br />指示</td>}
              <td className="border-b border-r border-black p-0 text-center text-[15px] font-bold">{b}</td>
              <td colSpan={7} className={`overflow-hidden whitespace-nowrap border-b border-r border-black p-0 pl-[3px] text-[14px] font-bold leading-4 ${red ? "text-[#e60000]" : ""} ${n === "11" ? "shadow-[inset_0_0_0_1px_#fff,inset_0_0_0_2px_#000]" : ""}`}>{text}</td>
              <td className="whitespace-nowrap border-b border-r border-black p-0 pl-px text-[14px]">
                {link && <a href="#fig" className="text-[#800080] underline underline-offset-2">{link}</a>}
              </td>
              <td className="border-b border-r border-[#d0d7e5] p-0" />
              <td className="border-b border-[#d0d7e5] p-0" />
            </tr>
          ))}
        </tbody>
      </table>
      <div className="ml-auto mr-[2px] flex w-[15px] flex-col items-stretch border-x border-[#5f86bd] bg-[#7d9cca]">
        <span className="h-[7px] border border-[#5f86bd] bg-white" />
        <button aria-label="向上滚动" className="flex h-5 items-center justify-center"><svg width="9" height="5"><path d="M0 5h9L4.500 0z" fill="#3a5078" /></svg></button>
        <span className="mt-[54px] flex-1 rounded-t-[2px] border border-[#5f79a3] bg-gradient-to-r from-[#f2f5fa] to-[#b8c6dc]" />
      </div>
      <div className="pointer-events-none absolute left-[97px] top-[55px] h-[46px] w-[408px] border-4 border-[#ffff10] shadow-[1px_2px_4px_rgba(0,0,0,0.6),inset_1px_2px_4px_rgba(0,0,0,0.5)]" />
    </div>
  );
}

function Excel() {
  return (
    <section className={`absolute bottom-0 left-[748px] top-[669px] flex w-[921px] flex-col overflow-hidden bg-[#c4dbf9] text-[12px] shadow-[0_0_10px_rgba(0,0,0,0.6)] ${UI}`}>
      <ExcelTop />
      <Ribbon />
      <div className="mt-[6px] flex shrink-0 items-start pl-[3px] pr-[5px] text-[#15428b]">
        <div className="flex h-[33px] flex-1 items-center border border-[#a3c0e4] bg-gradient-to-b from-[#fbfdff] to-[#e6f2fd] pl-[2px]">
          <svg width="15" height="17" aria-hidden="true"><path d="M7.500 1q3 2 6 1.500 0 10-6 13.500Q1.500 12.500 1.500 2.500 5 3 7.500 1z" fill="#f39a1e" stroke="#555" /><path d="M7.500 2v13Q3 12 2.500 4 6 3.500 7.500 2z" fill="#fbd078" /></svg>
          <b className="ml-[10px]">安全警告</b>
          <span className="ml-3">部分活动内容已被禁用。</span>
          <button className="ml-[11px] h-[21px] w-[70px] border border-[#a3c0e4] bg-white">选项...</button>
        </div>
        <button aria-label="关闭警告" className="ml-[9px] mt-1"><svg width="10" height="10"><path d="M1 1l7 8M8 1l-7 8" stroke="#6b7686" strokeWidth="2" /></svg></button>
      </div>
      <div className="mb-[2px] mt-[5px] flex h-[21px] shrink-0 border-y border-[#7f9dc6] bg-white pl-[2px] pr-[2px] text-[15px] leading-[19px] text-black">
        <input aria-label="名称框" defaultValue="C11" className={`w-[137px] text-center text-[14px] outline-none ${SHEET}`} />
        <button aria-label="名称列表" className="flex w-[22px] items-center justify-center"><svg width="7" height="4"><path d="M0 0h7L3.500 4z" fill="#000" /></svg></button>
        <div className={`flex w-[77px] items-center justify-end rounded-l-full border border-[#8fa9d0] bg-gradient-to-b from-[#e6edf8] to-[#b9cbe8] pr-1 text-[14px] font-bold italic text-[#444] ${SERIF}`}>fx</div>
        <input aria-label="编辑栏" defaultValue="附图蓝色板边位置都需要按金手指倒角制作" className="h-[19px] min-w-0 flex-1 pl-3 font-['Noto_Sans_CJK_SC',sans-serif] outline-none" />
        <button aria-label="展开编辑栏" className="flex w-[15px] items-center justify-center border-x border-[#7f9dc6] bg-[#dbe7f6]"><svg width="8" height="9"><path d="M1 0.500l3 3 3-3M1 4.500l3 3 3-3" fill="none" stroke="#000" strokeWidth="1.500" /></svg></button>
      </div>
      <Sheet />
    </section>
  );
}

function ImeBar() {
  return (
    <div className="absolute bottom-0 left-[1593px] h-3" aria-hidden="true">
      <svg width="165" height="12" className="block">
        <path d="M14 4.500h150V12H14z" fill="#fff" stroke="#b5bcc5" />
        <path d="M1 4l22-4 4 12H4z" fill="#38b11e" />
        <path d="M19 5q-9-2-10 3 0 3 10 3" fill="none" stroke="#fff" strokeWidth="2.500" />
        <path d="M36 9h14M43 9v3M67 9l3 3M82 12q1-3 4-2M100 8.500h16M102 12h2M106 12h2M110 12h2M145 12a3 3 0 0 1 6 0M152 12a3 3 0 0 1 6 0" fill="none" stroke="#555" strokeWidth="2" />
        <circle cx="131" cy="10" r="3" fill="#555" />
      </svg>
    </div>
  );
}

export default function App() {
  return (
    <div className="relative flex h-screen w-full overflow-hidden bg-[#3b7566]">
      <div className="flex w-[9px] shrink-0 flex-col border-r border-[#234a41]" aria-hidden="true">
        <div className="h-6 bg-white pl-[2px] pt-1"><svg width="6" height="15"><path d="M0.500 0.500h6M0.500 0v14h6" fill="none" stroke="#777" /><path d="M0 1.500h6" stroke="#000080" strokeWidth="3" /><path d="M3 12l3-4" stroke="#cc0" strokeWidth="2" /></svg></div>
        <div className="h-14 border-2 border-r-0 border-[#5b7f80] bg-[#9adbda]" />
        <div className="h-[70px] border-l-2 border-black bg-[#9adbda]" />
        <div className="flex-1 border-l border-[#6f9e92] bg-[#35695c]" />
        <div className="h-[52px] border-l-2 border-[#35695c] bg-[#55cfb0]" />
        <div className="h-5 border-2 border-r-0 border-black bg-[#fdc64b]" />
        <div className="h-9 border-y-2 border-black bg-[#ffffcc]" />
        <div className="h-[18px] bg-[#b3ffff]" />
      </div>
      <main className="flex min-w-0 flex-1 flex-col">
        <div className={`flex h-[31px] shrink-0 items-center gap-[5px] border-t border-[#a0a0a0] bg-white pl-[7px] pr-[10px] text-[13px] text-[#999] ${UI}`}>
          <WinIcon />
          <span>Graphic Editor 9.07b2 (00@HY-HYCAM-PC064 - Windows, pid:12940)</span>
          <div className="ml-auto flex gap-[35px]">
            <button aria-label="Minimize"><Min c="#888" /></button>
            <button aria-label="Maximize"><Max c="#888" /></button>
            <button aria-label="Close"><Cross c="#888" /></button>
          </div>
        </div>
        <Header />
        <div className="flex min-h-0 flex-1">
          <LayerPanel />
          <BoardCanvas />
          <Toolbox />
        </div>
        <StatusBar />
      </main>

      <Popview title="Popview - 2" className="left-[1519px] top-[341px] h-[522px] w-[628px]">
        <svg className="flex-1" role="img" aria-label="Magnified right finger">
          <g transform="translate(-1522 -374)">
            <path d="M1635 840V653L1719 568H1862L2018 840z" fill="#f00" />
            <path d="M1641 840V656L1724 575H1858L1862 577 2011 840H1996L1850 587H1728L1654 661V840z" fill="#f2f" />
          </g>
        </svg>
      </Popview>
      <Popview title="Popview - 1" closable className="left-[380px] top-[390px] h-[425px] w-[470px]" tools={["back", "upBig", "downBig", "leftBig", "rightBig", "zinBig", "zout"]}>
        <svg className="flex-1" role="img" aria-label="Magnified left finger">
          <g transform="translate(-383 -423)">
            <path d="M435 786L544 594H638L693 649V786z" fill="#f00" />
            <path d="M439 786L545 600 549 598H634L637 600 689 652V786H680V655L632 607H551L449 786z" fill="#f2f" />
          </g>
        </svg>
      </Popview>
      <Excel />
      <ImeBar />
    </div>
  );
}
